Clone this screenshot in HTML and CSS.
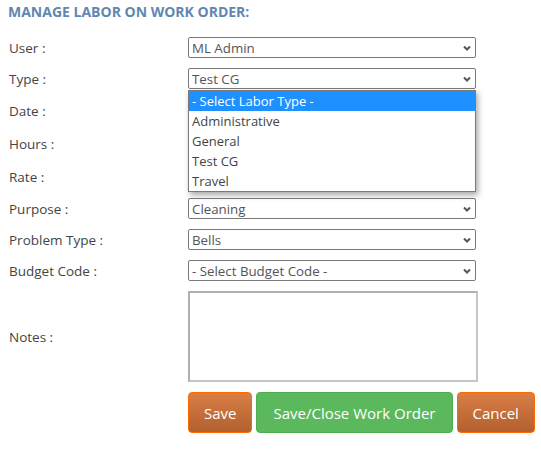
FILE: index.html
```html
<!DOCTYPE html>
<html lang="en">
<head>
    <meta charset="UTF-8">
    <meta name="viewport" content="width=device-width, initial-scale=1.0">
    <title>Manage Labor on Work Order</title>
    <link rel="stylesheet" href="styles.css">
</head>
<body>
    <div class="labor-form">
        <h3 class="form-title">MANAGE LABOR ON WORK ORDER:</h3>

        <div class="form-grid">
            <label class="field-label" for="userSelect">User :</label>
            <div class="select-wrap">
                <select id="userSelect" class="field-select">
                    <option>ML Admin</option>
                </select>
                <svg class="select-arrow" width="8" height="6" viewBox="0 0 8 6"><path d="M1 1.5 L4 4.5 L7 1.5" fill="none" stroke="#555" stroke-width="2"/></svg>
            </div>

            <label class="field-label" for="typeSelect">Type :</label>
            <div class="select-wrap">
                <select id="typeSelect" class="field-select">
                    <option>Test CG</option>
                </select>
                <svg class="select-arrow" width="8" height="6" viewBox="0 0 8 6"><path d="M1 1.5 L4 4.5 L7 1.5" fill="none" stroke="#555" stroke-width="2"/></svg>

                <!-- open list of the Type select -->
                <ul class="option-list">
                    <li class="selected">- Select Labor Type -</li>
                    <li>Administrative</li>
                    <li>General</li>
                    <li>Test CG</li>
                    <li>Travel</li>
                </ul>
            </div>

            <label class="field-label" for="dateInput">Date :</label>
            <input type="text" id="dateInput" class="field-input">

            <label class="field-label" for="hoursInput">Hours :</label>
            <input type="text" id="hoursInput" class="field-input">

            <label class="field-label" for="rateInput">Rate :</label>
            <input type="text" id="rateInput" class="field-input">

            <label class="field-label" for="purposeSelect">Purpose :</label>
            <div class="select-wrap">
                <select id="purposeSelect" class="field-select">
                    <option>Cleaning</option>
                </select>
                <svg class="select-arrow" width="8" height="6" viewBox="0 0 8 6"><path d="M1 1.5 L4 4.5 L7 1.5" fill="none" stroke="#555" stroke-width="2"/></svg>
            </div>

            <label class="field-label" for="problemSelect">Problem Type :</label>
            <div class="select-wrap">
                <select id="problemSelect" class="field-select">
                    <option>Bells</option>
                </select>
                <svg class="select-arrow" width="8" height="6" viewBox="0 0 8 6"><path d="M1 1.5 L4 4.5 L7 1.5" fill="none" stroke="#555" stroke-width="2"/></svg>
            </div>

            <label class="field-label" for="budgetSelect">Budget Code :</label>
            <div class="select-wrap">
                <select id="budgetSelect" class="field-select">
                    <option>- Select Budget Code -</option>
                </select>
                <svg class="select-arrow" width="8" height="6" viewBox="0 0 8 6"><path d="M1 1.5 L4 4.5 L7 1.5" fill="none" stroke="#555" stroke-width="2"/></svg>
            </div>

            <label class="field-label" for="notesInput">Notes :</label>
            <textarea id="notesInput" class="field-notes"></textarea>

            <div class="form-actions">
                <button class="btn btn-orange">Save</button>
                <button class="btn btn-green">Save/Close Work Order</button>
                <button class="btn btn-orange">Cancel</button>
            </div>
        </div>
    </div>
</body>
</html>
```

FILE: styles.css
```css
/* 기본 스타일 */
body {
    margin: 0 0 0 8px;
    font-family: "Open Sans", Arial, sans-serif;
    font-size: 13px;
    color: #444;
    background-color: #fff;
}

.form-title {
    margin: 0;
    padding-top: 2px;
    line-height: 20px;
    font-size: 14px;
    font-weight: bold;
    color: #5f87b2;
}

.form-grid {
    display: grid;
    grid-template-columns: 180px auto;
    justify-items: start;
    align-items: center;
    row-gap: 10px;
    margin-top: 15px;
}

.field-label {
    padding-left: 1px;
    font-size: 13.5px;
    color: #444;
}

/* select 박스 */
.select-wrap {
    position: relative;
}

.field-select {
    appearance: none;
    -webkit-appearance: none;
    display: block;
    width: 288px;
    height: 21px;
    margin: 0;
    padding: 0 20px 0 3px;
    border: 1px solid #7a7a7a;
    border-radius: 2px;
    background-color: #fff;
    font-family: inherit;
    font-size: 13.3px;
    color: #555;
}

.select-arrow {
    position: absolute;
    right: 5px;
    top: 8px;
    pointer-events: none;
}

.option-list {
    position: absolute;
    left: 0;
    top: 100%;
    z-index: 10;
    width: 288px;
    margin: 1px 0 0;
    padding: 0;
    list-style: none;
    border: 1px solid #7a7a7a;
    background-color: #fff;
    box-shadow: 2px 3px 6px rgba(0, 0, 0, 0.35);
    box-sizing: border-box;
}

.option-list li {
    height: 20px;
    line-height: 20px;
    padding-left: 3px;
    color: #444;
}

.option-list li.selected {
    background-color: #1e90ff;
    color: #fff;
}

.field-input {
    width: 288px;
    height: 23px;
    margin: 0;
    box-sizing: border-box;
    border: 1px solid #7a7a7a;
    border-radius: 2px;
}

.field-notes {
    width: 290px;
    height: 91px;
    margin: 0;
    box-sizing: border-box;
    border: 2px solid #c6c6c6;
    border-left-color: #b0b0b0;
    border-top-color: #b0b0b0;
    resize: none;
}

/* 버튼 */
.form-actions {
    grid-column: 2;
    display: flex;
    gap: 4px;
    white-space: nowrap;
}

.btn {
    flex-shrink: 0;
    height: 41px;
    padding: 0 15px;
    border-radius: 4px;
    font-family: inherit;
    font-size: 15px;
    color: #fff;
    cursor: pointer;
}

.btn-orange {
    border: 1px solid #ff6a00;
    background: linear-gradient(#d97e47, #b2602e);
}

.btn-green {
    padding: 0 16px;
    border: 1px solid #4cae4c;
    background-color: #5cb85c;
}
```
